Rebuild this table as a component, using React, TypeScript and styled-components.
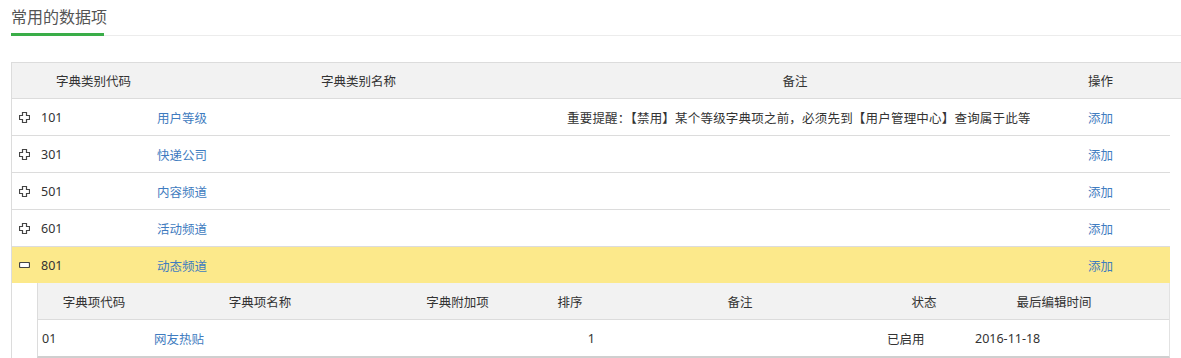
import styled, { createGlobalStyle } from 'styled-components';

const GlobalStyle = createGlobalStyle`
  html, body {
    overflow: hidden;
  }
  body {
    margin: 0;
    background: #fff;
    font-family: "Noto Sans", "Noto Sans CJK SC", sans-serif;
    color: #333;
  }
`;

const Page = styled.div`
  width: 1181px;
  height: 358px;
  padding-left: 11px;
  box-sizing: border-box;
  overflow: hidden;
`;

const TabBar = styled.div`
  display: flex;
  align-items: flex-start;
  height: 35px;
  border-bottom: 1px solid #ececec;
`;

const Tab = styled.div`
  box-sizing: border-box;
  height: 36px;
  width: 93px;
  padding-top: 9px;
  font-size: 16px;
  line-height: 16px;
  color: #555;
  border-bottom: 3px solid #3aad48;
  white-space: nowrap;
`;

const Table = styled.div`
  margin-top: 26px;
  border-left: 1px solid #dcdcdc;
  font-size: 12.5px;
`;

const MAIN_COLS = '29px 116px 403px 470px 140px';
const SUB_COLS = '112px 220px 175px 50px 290px 78px 182px 24px';

const HeadRow = styled.div`
  display: grid;
  grid-template-columns: ${MAIN_COLS};
  width: 1169px;
  height: 35px;
  align-items: center;
  background: #f2f2f2;
  border-top: 1px solid #dcdcdc;
  border-bottom: 1px solid #dcdcdc;
`;

const HeadCell = styled.div<{ $align?: 'left' | 'center'; $pad?: number; $span?: number }>`
  grid-column: span ${(p) => p.$span ?? 1};
  text-align: ${(p) => p.$align ?? 'center'};
  padding-left: ${(p) => p.$pad ?? 0}px;
  white-space: nowrap;
`;

const Row = styled.div<{ $open?: boolean }>`
  display: grid;
  grid-template-columns: ${MAIN_COLS};
  width: 1158px;
  height: 36px;
  align-items: center;
  background: ${(p) => (p.$open ? '#fce98b' : '#fff')};
  border-bottom: ${(p) => (p.$open ? 'none' : '1px solid #dcdcdc')};
`;

const Cell = styled.div<{ $pad?: number }>`
  padding-left: ${(p) => p.$pad ?? 0}px;
  white-space: nowrap;
  overflow: hidden;
  display: flex;
  align-items: center;
`;

const Note = styled(Cell)`
  letter-spacing: 0.2px;
`;

const Link = styled.a`
  color: #3f7cc0;
  text-decoration: none;
`;

const SubWrap = styled.div`
  width: 1158px;
  padding-left: 25px;
  box-sizing: border-box;
`;

const SubTable = styled.div`
  border-left: 1px solid #dcdcdc;
  border-right: 1px solid #e2e2e2;
  border-bottom: 2px solid #cfcfcf;
`;

const SubHead = styled.div`
  display: grid;
  grid-template-columns: ${SUB_COLS};
  height: 36px;
  align-items: center;
  background: #f2f2f2;
  border-bottom: 1px solid #dcdcdc;
`;

const SubRow = styled.div`
  display: grid;
  grid-template-columns: ${SUB_COLS};
  height: 36px;
  align-items: center;
  background: #fff;
`;

const SubCell = styled.div<{ $pad?: number; $align?: 'left' | 'center' | 'right' }>`
  padding-left: ${(p) => p.$pad ?? 0}px;
  text-align: ${(p) => p.$align ?? 'left'};
  white-space: nowrap;
`;

const PlusIcon = () => (
  <svg width="11" height="11" viewBox="0 0 11 11">
    <path
      d="M3.5 0.5h4v3h3v4h-3v3h-4v-3h-3v-4h3z"
      fill="#fff"
      stroke="#444"
      strokeWidth="1.2"
    />
  </svg>
);

const MinusIcon = () => (
  <svg width="11" height="6" viewBox="0 0 11 6">
    <rect x="0.5" y="0.5" width="10" height="5" rx="1" fill="#fff" stroke="#444" strokeWidth="1.2" />
  </svg>
);

const rows = [
  { code: '101', name: '用户等级', note: '重要提醒：【禁用】某个等级字典项之前，必须先到【用户管理中心】查询属于此等' },
  { code: '301', name: '快递公司', note: '' },
  { code: '501', name: '内容频道', note: '' },
  { code: '601', name: '活动频道', note: '' },
  { code: '801', name: '动态频道', note: '', open: true },
];

const App = () => {
  return (
    <Page>
      <GlobalStyle />
      <TabBar>
        <Tab>常用的数据项</Tab>
      </TabBar>
      <Table>
        <HeadRow>
          <HeadCell $span={2} $align='left' $pad={44}>字典类别代码</HeadCell>
          <HeadCell>字典类别名称</HeadCell>
          <HeadCell>备注</HeadCell>
          <HeadCell $align='left' $pad={58}>操作</HeadCell>
        </HeadRow>
        {rows.map((r) => (
          <div key={r.code}>
            <Row $open={r.open}>
              <Cell $pad={7}>{r.open ? <MinusIcon /> : <PlusIcon />}</Cell>
              <Cell>{r.code}</Cell>
              <Cell>
                <Link href='#'>{r.name}</Link>
              </Cell>
              <Note $pad={7}>{r.note}</Note>
              <Cell $pad={58}>
                <Link href='#'>添加</Link>
              </Cell>
            </Row>
            {r.open && (
              <SubWrap>
                <SubTable>
                  <SubHead>
                    <SubCell $align='center'>字典项代码</SubCell>
                    <SubCell $align='center'>字典项名称</SubCell>
                    <SubCell $align='center'>字典附加项</SubCell>
                    <SubCell $align='center'>排序</SubCell>
                    <SubCell $align='center'>备注</SubCell>
                    <SubCell $align='center'>状态</SubCell>
                    <SubCell $align='center'>最后编辑时间</SubCell>
                    <SubCell />
                  </SubHead>
                  <SubRow>
                    <SubCell $pad={4}>01</SubCell>
                    <SubCell $pad={4}>
                      <Link href='#'>网友热贴</Link>
                    </SubCell>
                    <SubCell />
                    <SubCell $align='right'>1</SubCell>
                    <SubCell />
                    <SubCell $pad={2}>已启用</SubCell>
                    <SubCell $pad={12}>2016-11-18</SubCell>
                    <SubCell />
                  </SubRow>
                </SubTable>
              </SubWrap>
            )}
          </div>
        ))}
      </Table>
    </Page>
  );
};

export default App;
